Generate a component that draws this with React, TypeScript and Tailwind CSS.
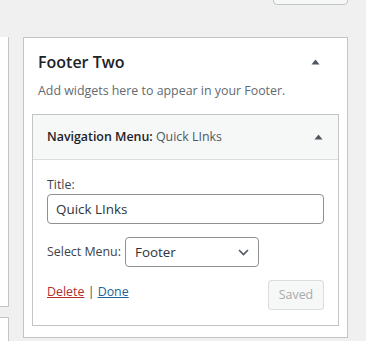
import React from 'react'

const font = { fontFamily: '"Open Sans", "Noto Sans", "Liberation Sans", sans-serif' }

function Caret() {
  return (
    <svg width="9" height="6" viewBox="0 0 9 6" className="block">
      <path d="M0.5 5.5 L4.5 0.5 L8.5 5.5 Z" fill="#50575e" />
    </svg>
  )
}

export default function App() {
  return (
    <div
      className="w-[366px] h-[341px] bg-[#f0f0f1] overflow-hidden text-[12.4px] text-[#3c434a]"
      style={font}
    >
      {/* cut-off button at the top */}
      <div className="flex justify-end pr-[18px]">
        <div className="w-[75px] h-[30px] -mt-[25px] bg-[#f6f7f7] border border-[#c3c4c7] rounded-[4px]" />
      </div>

      <div className="flex mt-[32px] h-[310px]">
        {/* left column, mostly off screen */}
        <div className="w-[9px] flex flex-col gap-[10px]">
          <div className="h-[270px] bg-white border-r border-b border-[#c3c4c7]" />
          <div className="flex-1 bg-white border-r border-t border-[#c3c4c7]" />
        </div>

        {/* Footer Two sidebar */}
        <div className="ml-[14px] w-[325px] h-[301px] bg-white border border-[#c3c4c7] flex flex-col">
          <div className="flex items-center justify-between pl-[14px] pr-[27px] pt-[13px]">
            <h3 className="text-[16px] leading-[22px] font-semibold text-[#1d2327]">Footer Two</h3>
            <Caret />
          </div>
          <p className="pl-[14px] mt-[9px] leading-[18px] text-[#646970]">
            Add widgets here to appear in your Footer.
          </p>

          {/* widget */}
          <div className="mx-[8px] mt-[14px] border border-[#c3c4c7] flex flex-col h-[212px]">
            <div className="h-[45px] bg-[#f6f7f7] border-b border-[#dcdcde] flex items-center justify-between pl-[14px] pr-[15px]">
              <div className="leading-[18px]">
                <span className="font-semibold text-[#1d2327]">Navigation Menu:</span>{' '}
                <span className="text-[#50575e]">Quick LInks</span>
              </div>
              <Caret />
            </div>

            <div className="px-[14px] pt-[16px]">
              <label className="block leading-[18px]">Title:</label>
              <div className="h-[30px] border border-[#8c8f94] rounded-[4px] flex items-center pl-[8px] text-[13.4px] text-[#2c3338]">
                Quick LInks
              </div>

              <div className="flex items-center gap-[4px] mt-[13px]">
                <span className="leading-[18px]">Select Menu:</span>
                <div className="w-[134px] h-[30px] border border-[#8c8f94] rounded-[4px] flex items-center justify-between pl-[9px] pr-[9px] text-[13.4px] text-[#2c3338]">
                  <span>Footer</span>
                  <svg width="11" height="7" viewBox="0 0 11 7">
                    <path d="M1 1 L5.5 5.5 L10 1" fill="none" stroke="#50575e" strokeWidth="1.6" />
                  </svg>
                </div>
              </div>

              <div className="flex items-start justify-between mt-[13px]">
                <div className="leading-[18px] mt-[3px]">
                  <a className="text-[#b32d2e] underline">Delete</a>
                  <span className="text-[#3c434a]"> | </span>
                  <a className="text-[#22649a] underline">Done</a>
                </div>
                <div className="w-[56px] h-[30px] bg-[#f6f7f7] border border-[#dcdcde] rounded-[3px] flex items-center justify-center text-[#a7aaad]">
                  Saved
                </div>
              </div>
            </div>
          </div>
        </div>
      </div>
    </div>
  )
}
